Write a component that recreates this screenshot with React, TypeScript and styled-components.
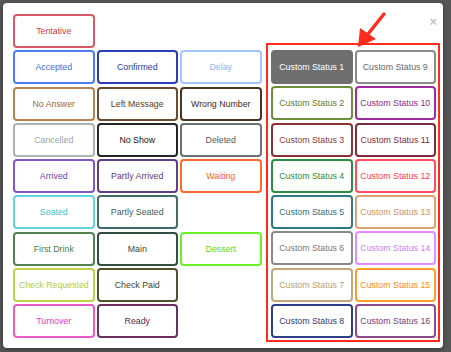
import styled, { createGlobalStyle } from "styled-components";

const GlobalStyle = createGlobalStyle`
  html, body {
    margin: 0;
    padding: 0;
    background: #575757;
    font-family: "Liberation Sans", Arial, sans-serif;
  }
  #root {
    width: 451px;
    height: 352px;
    padding: 3px 8px 4px 3px;
    box-sizing: border-box;
  }
`;

const Modal = styled.div`
  position: relative;
  width: 440px;
  height: 345px;
  background: #ffffff;
  border-radius: 4px;
  box-shadow: 0 2px 6px rgba(0, 0, 0, 0.35);
  box-sizing: border-box;
  padding: 11px 0 0 10px;
  display: flex;
  align-items: flex-start;
  gap: 4.5px;
`;

const StatusGrid = styled.div`
  display: grid;
  grid-template-columns: repeat(3, 81.5px);
  grid-auto-rows: 34px;
  column-gap: 2px;
  row-gap: 2.25px;
`;

const CustomBox = styled.div`
  margin-top: 29px;
  width: 174px;
  height: 299px;
  box-sizing: border-box;
  border: 2px solid #ff2b1c;
  padding: 5px 2px 2px 3px;
  display: grid;
  grid-template-columns: repeat(2, 81.5px);
  grid-auto-flow: column;
  grid-template-rows: repeat(8, 34px);
  column-gap: 2px;
  row-gap: 2.25px;
`;

const StatusButton = styled.div<{ $border: string; $text: string; $fill?: string }>`
  box-sizing: border-box;
  border: 2px solid ${(p) => p.$border};
  border-radius: 4px;
  background: ${(p) => p.$fill ?? "#ffffff"};
  color: ${(p) => p.$text};
  font-size: 8.8px;
  display: flex;
  align-items: center;
  justify-content: center;
  white-space: nowrap;
`;

const Empty = styled.div``;

const Close = styled.span`
  position: absolute;
  top: 12px;
  right: 6px;
  color: #c4c4c4;
  font-size: 13px;
  font-weight: bold;
  line-height: 13px;
`;

const Arrow = styled.svg`
  position: absolute;
  left: 350px;
  top: 6px;
`;

type Status = { label: string; border: string; text: string; fill?: string } | null;

const left: Status[] = [
  { label: "Tentative", border: "#d65a66", text: "#c8404e" },
  null,
  null,
  { label: "Accepted", border: "#4a7ef2", text: "#3a6ee6" },
  { label: "Confirmed", border: "#2a3dbd", text: "#2a3ca8" },
  { label: "Delay", border: "#a4c4ff", text: "#8cb6fa" },
  { label: "No Answer", border: "#b3844f", text: "#9a6a38" },
  { label: "Left Message", border: "#6b4c2c", text: "#5a3e22" },
  { label: "Wrong Number", border: "#4a3620", text: "#3a2a18" },
  { label: "Cancelled", border: "#aab4b7", text: "#98a4a7" },
  { label: "No Show", border: "#262626", text: "#141414" },
  { label: "Deleted", border: "#6c7272", text: "#555a5a" },
  { label: "Arrived", border: "#8259c4", text: "#6a3fb0" },
  { label: "Partly Arrived", border: "#5f4080", text: "#5c3b80" },
  { label: "Waiting", border: "#ff6a2c", text: "#ff5a1c" },
  { label: "Seated", border: "#62d4e0", text: "#3cc2d4" },
  { label: "Partly Seated", border: "#416c6c", text: "#3e5e5e" },
  null,
  { label: "First Drink", border: "#538253", text: "#4a7a4a" },
  { label: "Main", border: "#30503f", text: "#2f4a3a" },
  { label: "Dessert", border: "#6cf028", text: "#58dd14" },
  { label: "Check Requested", border: "#bdd24c", text: "#b4cb3c" },
  { label: "Check Paid", border: "#52522f", text: "#444428" },
  null,
  { label: "Turnover", border: "#e95ac9", text: "#e040c0" },
  { label: "Ready", border: "#6c3060", text: "#5a2a50" },
  null,
];

const custom: Status[] = [
  { label: "Custom Status 1", border: "#6f6f6f", text: "#ffffff", fill: "#6f6f6f" },
  { label: "Custom Status 2", border: "#6c8f3c", text: "#5a7a2a" },
  { label: "Custom Status 3", border: "#8c3232", text: "#8b3a3a" },
  { label: "Custom Status 4", border: "#2f8b40", text: "#2a8a3a" },
  { label: "Custom Status 5", border: "#2f7b84", text: "#2a6e78" },
  { label: "Custom Status 6", border: "#8a8a8a", text: "#777777" },
  { label: "Custom Status 7", border: "#c0a87c", text: "#b8a070" },
  { label: "Custom Status 8", border: "#2c408a", text: "#2a3a7a" },
  { label: "Custom Status 9", border: "#8a8a8a", text: "#666666" },
  { label: "Custom Status 10", border: "#9c2e9c", text: "#8a2a8a" },
  { label: "Custom Status 11", border: "#7c2c3c", text: "#7a2a3a" },
  { label: "Custom Status 12", border: "#ff4c5c", text: "#ff3a4a" },
  { label: "Custom Status 13", border: "#daa272", text: "#d09060" },
  { label: "Custom Status 14", border: "#e28cff", text: "#d080f8" },
  { label: "Custom Status 15", border: "#ff9c2c", text: "#ff8a10" },
  { label: "Custom Status 16", border: "#8c4c8c", text: "#7a3a7a" },
];

function renderStatus(s: Status, i: number) {
  if (!s) return <Empty key={i} />;
  return (
    <StatusButton key={i} $border={s.border} $text={s.text} $fill={s.fill}>
      {s.label}
    </StatusButton>
  );
}

export default function App() {
  return (
    <>
      <GlobalStyle />
      <Modal>
        <StatusGrid>{left.map(renderStatus)}</StatusGrid>
        <CustomBox>{custom.map(renderStatus)}</CustomBox>
        <Close>×</Close>
        <Arrow width="40" height="42" viewBox="0 0 40 42">
          <line x1="31" y1="5" x2="15" y2="25" stroke="#ff2b1c" strokeWidth="3.4" strokeLinecap="round" />
          <polygon points="5,38 7,19 23,30" fill="#ff2b1c" />
        </Arrow>
      </Modal>
    </>
  );
}
